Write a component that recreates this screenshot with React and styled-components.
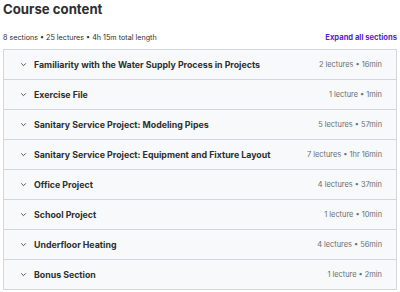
import React from 'react';
import styled, { createGlobalStyle } from 'styled-components';

const sections = [
    { title: 'Familiarity with the Water Supply Process in Projects', meta: '2 lectures • 16min' },
    { title: 'Exercise File', meta: '1 lecture • 1min' },
    { title: 'Sanitary Service Project: Modeling Pipes', meta: '5 lectures • 57min' },
    { title: 'Sanitary Service Project: Equipment and Fixture Layout', meta: '7 lectures • 1hr 16min' },
    { title: 'Office Project', meta: '4 lectures • 37min' },
    { title: 'School Project', meta: '1 lecture • 10min' },
    { title: 'Underfloor Heating', meta: '4 lectures • 56min' },
    { title: 'Bonus Section', meta: '1 lecture • 2min' }
];

function Chevron() {
    return (
        <svg width="7" height="7" viewBox="0 0 24 24" fill="none" stroke="#2d2f31" strokeWidth="2.8" strokeLinecap="round" strokeLinejoin="round">
            <polyline points="5 9 12 16 19 9" />
        </svg>
    );
}

function App() {
    return (
        <Page>
            <GlobalStyle />
            <Title>Course content</Title>
            <SummaryRow>
                <Summary>8 sections • 25 lectures • 4h 15m total length</Summary>
                <ExpandLink>Expand all sections</ExpandLink>
            </SummaryRow>
            <SectionList>
                {sections.map(s => (
                    <SectionRow key={s.title}>
                        <ChevronBox><Chevron /></ChevronBox>
                        <SectionTitle>{s.title}</SectionTitle>
                        <SectionMeta>{s.meta}</SectionMeta>
                    </SectionRow>
                ))}
            </SectionList>
        </Page>
    );
}

export default App;

const GlobalStyle = createGlobalStyle`
    body {
        margin: 0;
        background: #ffffff;
        font-family: Inter, "Noto Sans", sans-serif;
        color: #2d2f31;
    }
`;

const Page = styled.div`
    width: 400px;
    padding: 0 3px;
    box-sizing: border-box;
`;

const Title = styled.h2`
    margin: 0;
    padding-top: 1px;
    font-size: 13.2px;
    font-weight: 700;
    line-height: 16px;
    letter-spacing: 0;
`;

const SummaryRow = styled.div`
    display: flex;
    justify-content: space-between;
    align-items: center;
    margin-top: 14px;
    height: 12px;
`;

const Summary = styled.span`
    font-size: 7.2px;
    color: #2d2f31;
`;

const ExpandLink = styled.span`
    font-size: 7.6px;
    font-weight: 700;
    color: #5624d0;
`;

const SectionList = styled.div`
    margin-top: 6px;
    border: 1px solid #d1d7dc;
`;

const SectionRow = styled.div`
    display: flex;
    align-items: center;
    height: 29px;
    padding: 0 14px 0 16px;
    background: #f7f9fa;
    border-bottom: 1px solid #d1d7dc;
    &:last-child {
        border-bottom: none;
    }
`;

const ChevronBox = styled.div`
    display: flex;
    align-items: center;
    width: 8px;
    margin-right: 6px;
`;

const SectionTitle = styled.div`
    flex: 1;
    font-size: 8.8px;
    font-weight: 700;
    color: #2d2f31;
`;

const SectionMeta = styled.div`
    font-size: 7.4px;
    color: #6a6f73;
`;
